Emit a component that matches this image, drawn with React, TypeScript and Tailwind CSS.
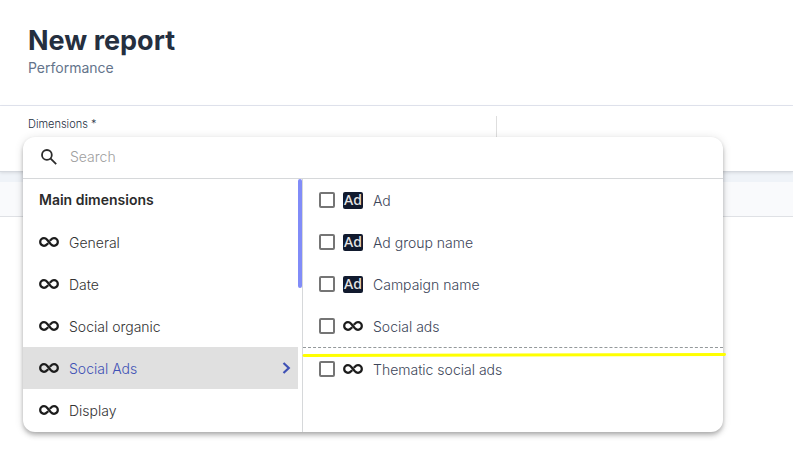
import React from "react";

const sources = ["General", "Date", "Social organic", "Social Ads", "Display"];

const options = [
  { label: "Ad", icon: "ad" },
  { label: "Ad group name", icon: "ad" },
  { label: "Campaign name", icon: "ad" },
  { label: "Social ads", icon: "infinity" },
];

function InfinityIcon() {
  return (
    <svg viewBox="0 0 20 10" className="h-[10px] w-5 shrink-0" fill="none" stroke="#1c1c1c" strokeWidth="2.3" aria-hidden="true">
      <path d="M9.2 6.2 L8.1 7.3 C7.2 8.3 6.3 8.8 5 8.8 A3.8 3.8 0 0 1 5 1.2 C6.3 1.2 7.2 1.7 8.1 2.7 L11.9 7.3 C12.8 8.3 13.7 8.8 15 8.8 A3.8 3.8 0 0 0 15 1.2 C13.7 1.2 12.8 1.7 11.9 2.7 L10.8 3.8" />
    </svg>
  );
}

function AdIcon() {
  return (
    <span className="flex h-[17px] w-5 shrink-0 items-center justify-center rounded-xs bg-[#111a2e] font-['Noto_Sans',sans-serif] text-sm leading-4 font-medium text-[#e5e5e5]" aria-hidden="true">
      Ad
    </span>
  );
}

function Option({ label, icon }: { label: string; icon: string }) {
  return (
    <label className="flex h-[42px] items-center pl-4 text-[#3d4659]">
      <input type="checkbox" className="h-4 w-4 shrink-0 appearance-none rounded-xs border-2 border-[#757575] bg-white checked:bg-[#3f51b5]" />
      <span className="ml-2 flex w-5 items-center">{icon === "ad" ? <AdIcon /> : <InfinityIcon />}</span>
      <span className="ml-[10px] pt-[2px]">{label}</span>
    </label>
  );
}

export default function App() {
  return (
    <main className="min-h-screen bg-white font-['Inter',sans-serif] text-sm">
      <header className="border-b border-[#e2e5ef] px-7 pt-6 pb-7">
        <h1 className="text-[27px] leading-[34px] font-bold text-[#252f3f]">New report</h1>
        <p className="leading-[19px] text-[#64748b]">Performance</p>
      </header>

      <div className="relative">
        <section className="relative flex h-[66px] border-b border-[#d5d9df] px-7 pt-[10px] shadow-[0_1px_3px_#0000001a]">
          <div className="w-[468px] text-[11px] leading-4 font-light text-[#252f3f]">Dimensions *</div>
          <div className="border-l border-[#dedede]" />
        </section>
        <div className="h-[10px] bg-[#eff3f8]" />
        <div className="h-[35px] border-b border-[#dfe1e5] bg-[#f9fafc]" />

        <div className="absolute top-[31px] right-[70px] left-[23px] rounded-xl bg-white pb-px shadow-[0_2px_4px_-1px_#0003,0_4px_5px_0_#00000024,0_1px_10px_0_#0000001f]">
          <div className="flex h-[42px] items-center border-b border-[#d6d8da] pr-4 pb-[2px] pl-[18px]">
            <svg viewBox="0 0 16 16" className="h-4 w-4" fill="none" stroke="#2b2b2b" strokeWidth="1.8" aria-hidden="true">
              <circle cx="5.9" cy="5.9" r="4.9" />
              <path d="M9.4 9.4 L15.2 15.2" />
            </svg>
            <input type="text" aria-label="Search" placeholder="Search" className="ml-[13px] min-w-0 flex-1 font-light text-[#333333] outline-none placeholder:text-[#a0a0a0]" />
          </div>

          <div className="flex font-light">
            <nav className="-mb-px flex w-[280px] border-r border-[#d6d8da] pb-px">
              <div className="flex-1">
                <h2 className="flex h-[42px] items-center pl-4 font-semibold text-[#2b2b2b]">Main dimensions</h2>
                {sources.map((name) => (
                  <button
                    key={name}
                    type="button"
                    className={
                      name === "Social Ads"
                        ? "flex h-[42px] w-full items-center bg-[#e0e0e0] pr-[7px] pl-4 text-[#3f51b5]"
                        : "flex h-[42px] w-full items-center pr-[7px] pl-4 text-[#333333]"
                    }
                  >
                    <InfinityIcon />
                    <span className="ml-[10px] flex-1 pt-[2px] text-left">{name}</span>
                    {name === "Social Ads" && (
                      <svg viewBox="0 0 9 12" className="h-3 w-[9px]" fill="none" stroke="#3f51b5" strokeWidth="2.2" aria-hidden="true">
                        <path d="M1.5 1 L6.8 6 L1.5 11" />
                      </svg>
                    )}
                  </button>
                ))}
              </div>
              <div className="w-1">
                <div className="h-[109px] rounded-sm bg-[#818cf8]" />
              </div>
            </nav>

            <div className="flex-1">
              {options.map((o) => (
                <Option key={o.label} label={o.label} icon={o.icon} />
              ))}
              <div className="relative border-t border-dashed border-[#94999b]">
                <svg className="absolute top-1 left-0 h-[6px] w-full overflow-visible" viewBox="0 0 420 6" preserveAspectRatio="none" aria-hidden="true">
                  <path d="M1 3.6 L421.5 2.6" stroke="#ffff00" strokeWidth="3" strokeLinecap="round" />
                </svg>
                <Option label="Thematic social ads" icon="infinity" />
              </div>
            </div>
          </div>
        </div>
      </div>
    </main>
  );
}
